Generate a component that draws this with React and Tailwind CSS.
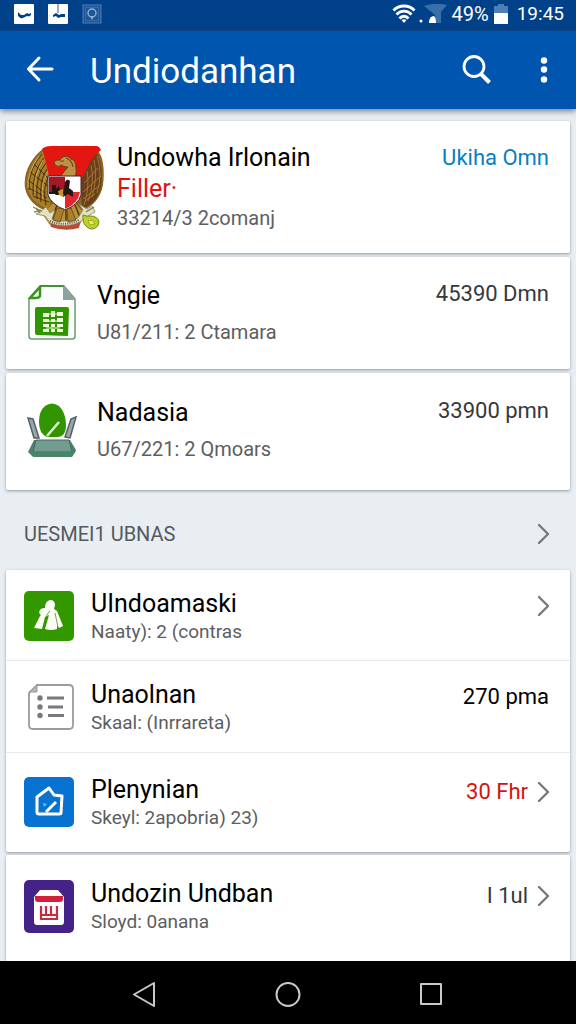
const iconProps = { fill: 'none', stroke: 'currentColor', strokeLinecap: 'round', strokeLinejoin: 'round' };

function StatusBar() {
  return (
    <div className="h-[31px] bg-[#00418a] flex items-center justify-between pl-[14px] pr-3 text-white">
      <div className="flex items-center gap-[14px] pb-1">
        <svg width="20" height="20" viewBox="0 0 20 20">
          <rect width="20" height="20" rx="1" fill="#fff" />
          <path d="M4 8l3 3 3 0 3-2 2 1 2-1v2l-2 1.500-2-.5-3 1.500-3 1-3-2.500z" fill="#063f86" />
        </svg>
        <svg width="20" height="20" viewBox="0 0 20 20">
          <rect width="20" height="20" rx="1" fill="#fff" />
          <path d="M10 0v9" stroke="#355f98" />
          <path d="M5 11l3-2 3 2 2-1h4v3h-4l-3 1-2-2-3 1z" fill="#063f86" />
        </svg>
        <svg width="20" height="20" viewBox="0 0 20 20">
          <rect x="1" y="1" width="18" height="18" fill="#1d5595" stroke="#4e80b5" />
          <rect x="3.500" y="3.500" width="13" height="13" fill="none" stroke="#376ea9" />
          <circle cx="10" cy="9" r="4" fill="#1d5595" stroke="#8bb3d9" strokeWidth="1.500" />
          <path d="M8 12l2 4 2-4" fill="#8bb3d9" />
        </svg>
      </div>
      <div className="flex items-center pb-1">
        <svg width="24" height="20" viewBox="0 0 24 20" {...iconProps} strokeWidth="2.800" strokeLinecap="butt">
          <path d="M1.500 6.500C7 .5 17 .5 22.500 6.500M4.500 10.500c4-4.500 11-4.500 15 0M7.500 14.500c2.500-3 6.500-3 9 0" />
          <path d="M9.500 16l2.500 3 2.500-3c-1.500-1-3.500-1-5 0z" fill="currentColor" stroke="none" />
        </svg>
        <svg width="32" height="20" viewBox="0 0 32 20">
          <circle cx="5" cy="17" r="1.500" fill="#fff" />
          <path d="M8 2q12-4 23-1l-6 7v11H14q5-5 5-8z" fill="#386fa9" />
          <path d="M13 19q0-7 5-7 2 2 2 7z" fill="#fff" />
        </svg>
        <span className="ml-1 text-[20px] leading-6">49%</span>
        <svg className="ml-1 mr-2" width="16" height="22" viewBox="0 0 16 22">
          <path d="M5 1h6v2h4v8H1V3h4z" fill="#4b7fb5" />
          <path d="M1 10h14v11H1z" fill="#fff" />
        </svg>
        <span className="text-[19px] leading-6">19:45</span>
      </div>
    </div>
  );
}

function Header() {
  return (
    <header className="relative z-10 h-[78px] bg-[#0055ae] text-white flex items-center pl-6 pr-4 shadow-[0_2px_6px_rgba(60,70,90,0.7)]">
      <button aria-label="Back" className="w-8 h-8 flex items-center justify-center">
        <svg width="32" height="32" viewBox="0 0 32 32" {...iconProps} strokeWidth="3">
          <path d="M28 15H4.500M15 4L4.500 15 15 26" />
        </svg>
      </button>
      <h1 className="flex-1 ml-[34px] pt-1 text-[35px] leading-10">Undiodanhan</h1>
      <button aria-label="Search" className="w-8 h-8">
        <svg width="32" height="32" viewBox="0 0 32 32" {...iconProps} strokeWidth="2.800">
          <circle cx="14" cy="12.500" r="10" />
          <path d="M21 20l8.500 8.500" strokeWidth="4" strokeLinecap="butt" />
        </svg>
      </button>
      <button aria-label="More options" className="ml-9 w-8 h-8">
        <svg width="32" height="32" viewBox="0 0 32 32" fill="currentColor">
          <circle cx="16" cy="6.500" r="3.200" />
          <circle cx="16" cy="15.500" r="3.200" />
          <circle cx="16" cy="25.500" r="3.200" />
        </svg>
      </button>
    </header>
  );
}

function GarudaEmblem() {
  return (
    <svg width="80" height="84" viewBox="0 0 80 84">
      <path d="M20 2C7 12-1 26 1 42c2 11 11 20 22 23h34c12-4 20-14 22-26 2-15 0-30-6-35L60 2z" fill="#8a6420" />
      <path d="M20 4C8 14 2 26 3 40c2 12 11 20 22 23l3-22z" fill="#a87c28" />
      <path d="M72 5L57 32l1 31c11-4 17-12 19-22 2-14 0-26-5-36z" fill="#69401c" />
      <path
        d="M18 8Q4 24 5 44M20 12Q8 26 9 49M22 17Q11 30 13 53M23 23Q15 34 17 56M25 30Q18 42 22 59M4 34l17 13M5 42l18 10M9 50l16 6M6 26l18 14M10 18l15 15"
        fill="none" stroke="#3a2810" strokeWidth=".9"
      />
      <path d="M15 10Q3 27 4 42M19 14Q9 31 11 47M24 25Q16 39 19 54" fill="none" stroke="#d2ae52" strokeWidth=".8" />
      <path
        d="M73 10Q79 28 73 47M70 14Q74 31 68 51M67 19Q71 36 64 55M63 25Q66 40 60 59M77 30L59 46M76 39L59 53M74 22L60 37M71 48l-10 7"
        fill="none" stroke="#ad7833" strokeWidth=".9"
      />
      <path d="M18 3Q21 0 27 0h46q3 1 4 4Q66 12 59 31H25Q22 14 18 3z" fill="#e41611" />
      <path d="M36 31q5-7 8-10-5 0-6-2-4 3-7 0-2-3 1-5 5 1 5-2 6-4 10 1 5 1 5 9 1 8-3 10z" fill="#c09142" stroke="#60401c" />
      <path d="M42 12q6 2 7 9M36 15h4" fill="none" stroke="#6b481f" strokeWidth="1.200" />
      <path d="M28 58l-9 11 6 9q15 6 31 0l5-9-9-11z" fill="#b99137" />
      <path d="M33 59l-5 14M38 61l-3 14M42 61v14M46 60l3 14M51 59l5 12" stroke="#4e3814" fill="none" strokeWidth="1.500" />
      <path d="M24 30h33v19q-3 10-16 15Q27 58 24 49z" fill="#fff" stroke="#452526" />
      <path d="M25 31h16v15H25z" fill="#a41926" />
      <path d="M41 46h15q-2 12-15 17z" fill="#e0272b" />
      <path d="M25 46h16v2H25zM28 39h4v4l3-3 2 9h-5l-4-3zM41 36q2-4 5-1l-1 7 4 3v6l-5-3-5 3z" fill="#231714" />
      <path d="M34 45l5-2v8l-4-2z" fill="#c8932b" />
      <path d="M25 75q15 5 32-1l-2 8q-14 4-28-1z" fill="#bd4838" />
      <path d="M9 61l8 4 5-4 4 6 5-3-3 9 8 2q10 1 18-3l5-8-4-6 8 5 5-3 3 6-9 5-6 5q-15 7-30 1l-5-7-9-2 6-3z" fill="#e4e0c2" stroke="#85855d" strokeWidth=".8" />
      <path d="M33 62l-4 12 7 2 4-13zM43 63l1 13 8-2-5-12z" fill="#a97f2c" stroke="#5c4418" strokeWidth=".8" />
      <path d="M26 75q15 6 29-1" fill="none" stroke="#625847" strokeWidth="2" strokeDasharray="1 1.200" />
      <path d="M10 66l7-2M12 62l4 5M70 61l-8 5" stroke="#768043" strokeWidth="1.300" />
      <path d="M59 69q5 2 7 1 8 0 9 6-1 7-8 7-7-2-8-9z" fill="#bdd023" stroke="#76851c" />
      <path d="M64 75l4-1 3 4-5 1z" fill="#e5ed67" stroke="#84951f" strokeWidth=".7" />
    </svg>
  );
}

function SheetIcon() {
  return (
    <svg width="48" height="56" viewBox="0 0 48 56">
      <path d="M12 1h24l11 13v37q0 3-3 3H4q-3 0-3-3V14z" fill="#fafdfb" stroke="#6d9c78" strokeWidth="1.500" />
      <path d="M12 1h24" stroke="#459039" strokeWidth="2" />
      <path d="M35 1l12 14H35z" fill="#8ea1a2" />
      <path d="M12 2v9q-1 2-4 2H2z" fill="#edf9e7" stroke="#38931f" strokeWidth="2.500" />
      <path d="M9 22h30q2 0 2 2l-1 27-31-1q-2 0-2-2V24q0-2 2-2z" fill="#309600" />
      <path d="M15 28h6v4h-6zM23 26h4v6h-4zM29 27h6v4h-6zM15 34h6v3h-6zM23 34h4v3h-4zM29 33h6v4h-6zM15 39h6v3h-6zM23 39h4v3h-4zM29 39h6v3h-6zM15 44h6v3h-6zM23 44h4v3h-4zM29 44h6v3h-6z" fill="#efffdc" />
      <path d="M21 29h14M18 36h14M18 43h14" stroke="#efffdc" />
    </svg>
  );
}

function LeafTrayIcon() {
  return (
    <svg width="50" height="56" viewBox="0 0 50 56">
      <path d="M1 16l5 1 6 19H7zM49 15l-5 2-6 18 5 1z" fill="#9ba7ac" stroke="#526166" strokeWidth="1.500" />
      <path d="M7 38h36l6 10-4 6H5l-4-4z" fill="#507d71" />
      <path d="M9 38h33l3 12H6z" fill="#739c91" stroke="#46685e" />
      <path d="M2 49l6 1h34l7-1-4 6H6z" fill="#498569" />
      <path d="M12 20Q12 9 18 4q7-5 14 0 7 7 7 19 0 12-9 12H20q-8-3-8-15z" fill="#319400" />
      <path d="M20 34l12-14" stroke="#dcf5cc" strokeWidth="2.500" />
    </svg>
  );
}

function GreenTile() {
  return (
    <svg width="50" height="50" viewBox="0 0 50 50">
      <rect width="50" height="50" rx="5" fill="#339700" />
      <path
        d="M26 9q5 0 5 5l-1 4 3 2 6 15-4 2-2-3v4q-6 2-12 0l4-14-4 2-3 12-8-1 6-12 1-1q-3-2-1-5 1-2 5-2 0-7 5-8z"
        fill="#fcfff7"
      />
      <path d="M26 20q-3 3-4 6M31 22l3 14" stroke="#66ab3d" fill="none" />
    </svg>
  );
}

function ListDocIcon() {
  return (
    <svg width="50" height="50" viewBox="0 0 50 50">
      <path d="M13 3h32q4 0 4 4v36q0 4-4 4H9q-4 0-4-4V11z" fill="#fff" stroke="#999b9d" strokeWidth="1.800" />
      <path d="M13 3v7H5z" fill="#b1b4b5" stroke="#999b9d" />
      <g fill="#77797d">
        <circle cx="16" cy="16" r="2.700" />
        <circle cx="16" cy="25" r="2.700" />
        <circle cx="16" cy="33.500" r="2.700" />
        <path d="M23 14.500h17v3H23zM24 23.500h15v3H24zM24 32h16v3H24z" />
      </g>
    </svg>
  );
}

function HouseTile() {
  return (
    <svg width="50" height="50" viewBox="0 0 50 50">
      <rect width="50" height="50" rx="5" fill="#0872d1" />
      <path d="M25 11l5 7 8 1-1 17q0 1-2 1H15q-2 0-2-2V20z" fill="none" stroke="#fff" strokeWidth="3" strokeLinejoin="round" />
      <path d="M22 35l10-10" stroke="#fff" strokeWidth="3" />
      <path d="M19 26l4 1-3 3z" fill="#4cc7ff" />
    </svg>
  );
}

function StoreTile() {
  return (
    <svg width="50" height="53" viewBox="0 0 50 53">
      <rect width="50" height="53" rx="5" fill="#432388" />
      <path d="M16 10h18l6 7v25q0 3-3 3H13q-3 0-3-3V17z" fill="#fff" />
      <path d="M11 16h28v4q-1 2-3 2H14q-3 0-3-3z" fill="#d51e3a" />
      <path d="M17 26v13h16V26M22 26v8M27 26v8M17 35h16" fill="none" stroke="#c82b42" strokeWidth="2.200" />
    </svg>
  );
}

function Chevron({ label }) {
  return (
    <button aria-label={label} className="w-4 h-7 flex items-center justify-center text-[#77797c]">
      <svg width="16" height="24" viewBox="0 0 16 24" {...iconProps} strokeWidth="2.400">
        <path d="M3 3l9 9-9 9" />
      </svg>
    </button>
  );
}

const accounts = [
  {
    title: 'Vngie', sub: 'U81/211: 2 Ctamara', value: '45390 Dmn',
    icon: <SheetIcon />, pad: 'pt-[23px] pb-[23px]',
  },
  {
    title: 'Nadasia', sub: 'U67/221: 2 Qmoars', value: '33900 pmn',
    icon: <LeafTrayIcon />, pad: 'pt-6 pb-[27px]',
  },
];

const services = [
  { title: 'UIndoamaski', sub: 'Naaty): 2 (contras', icon: <GreenTile />, arrow: true, pad: 'pt-5 pb-[14px] border-b' },
  { title: 'Unaolnan', sub: 'Skaal: (Inrrareta)', icon: <ListDocIcon />, value: '270 pma', color: 'text-black', pad: 'pt-5 pb-[15px] border-b' },
  { title: 'Plenynian', sub: 'Skeyl: 2apobria) 23)', icon: <HouseTile />, value: '30 Fhr', color: 'text-[#d31410]', arrow: true, pad: 'pt-[23px] pb-5' },
];

const others = [
  { title: 'Undozin Undban', sub: 'Sloyd: 0anana', icon: <StoreTile />, value: 'I 1ul', color: 'text-[#36383b]', arrow: true, pad: 'pt-[25px] pb-[25px]' },
];

function AccountRow({ item }) {
  return (
    <li className={`bg-white rounded-xs shadow-[0_1px_3px_rgba(90,105,120,0.65)] flex items-center pl-5 pr-[21px] ${item.pad}`}>
      <div className="w-[52px] shrink-0 flex justify-center">{item.icon}</div>
      <div className="ml-[19px] flex-1 flex flex-col gap-[6px]">
        <h2 className="text-[25px] leading-8 text-black">{item.title}</h2>
        <p className="text-[20px] leading-7 text-[#5c5e61]">{item.sub}</p>
      </div>
      <p className="self-start text-[22px] leading-7 text-[#36383b]">{item.value}</p>
    </li>
  );
}

function ServiceRow({ item }) {
  return (
    <li className={`flex items-center pl-[18px] pr-[18px] border-[#e6e9ed] ${item.pad}`}>
      <div className="w-[50px] h-14 pb-1 shrink-0 flex items-center">{item.icon}</div>
      <div className="ml-[17px] flex-1">
        <h2 className="text-[25px] leading-7 text-black">{item.title}</h2>
        <p className="text-[19px] leading-7 text-[#5c5e61]">{item.sub}</p>
      </div>
      <div className="self-start flex items-center gap-2 pt-[2px]">
        {item.value && (
          <p className={`text-[22px] leading-7 ${item.color} ${item.arrow ? '' : 'pr-[3px]'}`}>{item.value}</p>
        )}
        {item.arrow && <Chevron label={item.title} />}
      </div>
    </li>
  );
}

function NavBar() {
  return (
    <nav className="h-[63px] bg-black text-[#c9c9c9] flex items-center px-18">
      <button aria-label="Back" className="flex-1 flex justify-center">
        <svg width="26" height="28" viewBox="0 0 26 28" {...iconProps} strokeWidth="2">
          <path d="M23 4v23L3 15.500z" />
        </svg>
      </button>
      <button aria-label="Home" className="flex-1 flex justify-center">
        <svg width="26" height="28" viewBox="0 0 26 28" {...iconProps} strokeWidth="2">
          <circle cx="13" cy="15.500" r="11.500" />
        </svg>
      </button>
      <button aria-label="Recent apps" className="flex-1 flex justify-center">
        <svg width="26" height="28" viewBox="0 0 26 28" {...iconProps} strokeWidth="2">
          <rect x="2" y="5" width="20" height="20" />
        </svg>
      </button>
    </nav>
  );
}

export default function App() {
  return (
    <div className="min-h-screen flex flex-col bg-[#e9eef2] font-[Roboto,sans-serif]">
      <StatusBar />
      <Header />
      <main className="flex-1 flex flex-col px-[6px] pt-3">
        <ul className="flex flex-col gap-1">
          <li className="bg-white rounded-xs shadow-[0_1px_3px_rgba(90,105,120,0.65)] flex items-start pl-[18px] pr-[21px] pt-[21px] pb-[21px]">
            <div className="shrink-0 pt-1"><GarudaEmblem /></div>
            <div className="ml-[13px] flex-1">
              <h2 className="text-[25px] leading-8 text-black">Undowha Irlonain</h2>
              <p className="text-[25px] leading-[30px] text-[#dc1512]">Filler·</p>
              <p className="text-[20px] leading-7 text-[#5c5e61]">33214/3 2comanj</p>
            </div>
            <a href="#detail" className="text-[22px] leading-8 text-[#087fc4]">Ukiha Omn</a>
          </li>
          {accounts.map((item) => <AccountRow key={item.title} item={item} />)}
        </ul>

        <div className="h-20 flex items-center justify-between pl-[18px] pr-[18px] pt-2">
          <h2 className="text-[20px] leading-7 text-[#55595f]">UESMEI1 UBNAS</h2>
          <Chevron label="UESMEI1 UBNAS" />
        </div>

        <ul className="bg-white rounded-xs shadow-[0_1px_3px_rgba(90,105,120,0.65)]">
          {services.map((item) => <ServiceRow key={item.title} item={item} />)}
        </ul>
        <ul className="mt-[3px] flex-1 bg-white rounded-t-xs shadow-[0_1px_3px_rgba(90,105,120,0.65)]">
          {others.map((item) => <ServiceRow key={item.title} item={item} />)}
        </ul>
      </main>
      <NavBar />
    </div>
  );
}
